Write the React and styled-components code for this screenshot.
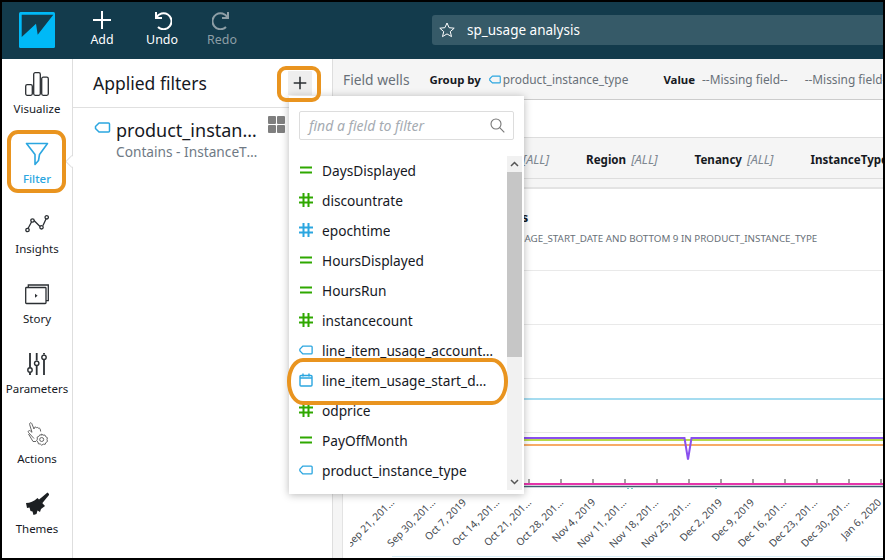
import React from "react";
import styled, { createGlobalStyle } from "styled-components";

const Global = createGlobalStyle`
  html, body { margin: 0; padding: 0; background: #000; }
  * { box-sizing: border-box; }
`;

const FONT = `"Noto Sans", "Open Sans", Arial, sans-serif`;
const BLUE = "#2ba6e0";
const GREEN = "#2fa800";
const ORANGE = "#e9941f";

const Frame = styled.div`
  position: relative;
  width: 885px;
  height: 560px;
  border: 2px solid #000;
  background: #fff;
  font-family: ${FONT};
  color: #16191f;
  overflow: hidden;
  display: flex;
  flex-direction: column;
`;

/* ---------- top bar ---------- */
const TopBar = styled.header`
  height: 57px;
  flex: none;
  background: #133b4c;
  display: flex;
  align-items: center;
  padding-left: 17px;
`;
const Logo = styled.svg`
  width: 36px;
  height: 36px;
  flex: none;
  margin-right: 17px;
  margin-top: -1px;
`;
const TopButton = styled.button`
  width: 60px;
  height: 57px;
  padding: 8px 0 0;
  border: 0;
  background: none;
  font: 12.4px/16px ${FONT};
  color: ${(p) => (p.$off ? "#8d9ea6" : "#fff")};
  display: flex;
  flex-direction: column;
  align-items: center;
  gap: 2px;
  svg { display: block; }
`;
const AnalysisBar = styled.div`
  flex: 1;
  height: 30px;
  margin-left: 180px;
  margin-top: -2px;
  padding-left: 7px;
  background: #365a68;
  border-radius: 3px 0 0 3px;
  display: flex;
  align-items: center;
  gap: 12px;
  color: #fff;
  font-size: 13.5px;
`;

/* ---------- workspace ---------- */
const Workspace = styled.div`
  flex: 1;
  display: flex;
  min-height: 0;
`;
const Rail = styled.nav`
  position: relative;
  width: 71px;
  flex: none;
  padding-top: 13px;
  border-right: 1px solid #dedede;
  display: flex;
  flex-direction: column;
`;
const RailItem = styled.div`
  height: 70px;
  flex: none;
  display: flex;
  flex-direction: column;
  align-items: center;
  font-size: 11.5px;
  line-height: 16px;
  white-space: nowrap;
  color: ${(p) => (p.$active ? BLUE : "#16191f")};
  font-weight: ${(p) => (p.$active ? 500 : 400)};
  svg { display: block; margin-bottom: 5px; }
`;
const Notch = styled.span`
  position: absolute;
  right: -4px;
  top: 98px;
  width: 9px;
  height: 9px;
  background: #fff;
  border-left: 1px solid #dedede;
  border-bottom: 1px solid #dedede;
  transform: rotate(45deg);
`;

const FilterPanel = styled.aside`
  width: 260px;
  flex: none;
  border-right: 1px solid #dedede;
  display: flex;
  flex-direction: column;
`;
const PanelHead = styled.div`
  height: 49px;
  flex: none;
  padding: 0 20px 0 20px;
  border-bottom: 1px solid #e0e0e0;
  display: flex;
  align-items: center;
  justify-content: space-between;
`;
const PanelTitle = styled.h2`
  margin: 0;
  font-size: 17.5px;
  font-weight: 400;
`;
const AddButton = styled.span`
  width: 24px;
  height: 24px;
  background: #eee;
  display: flex;
  align-items: center;
  justify-content: center;
`;
const AppliedFilter = styled.div`
  display: flex;
  padding: 8px 72px 0 21px;
  gap: 5px;
  svg { margin-top: 6px; flex: none; }
`;
const AppliedText = styled.div`
  min-width: 0;
  flex: 1;
`;
const AppliedName = styled.div`
  font-size: 18px;
  line-height: 28px;
  white-space: nowrap;
  overflow: hidden;
  text-overflow: ellipsis;
`;
const AppliedSub = styled.div`
  font-size: 13.7px;
  line-height: 16px;
  color: #6f7a85;
  white-space: nowrap;
  overflow: hidden;
  text-overflow: ellipsis;
`;
const GridIcon = styled.svg`
  position: absolute;
  left: 266px;
  top: 114px;
`;

/* ---------- main area ---------- */
const Main = styled.main`
  flex: 1;
  min-width: 0;
  display: flex;
  flex-direction: column;
`;
const FieldWells = styled.div`
  height: 41px;
  flex: none;
  background: #f5f5f5;
  border-bottom: 1px solid #ccc;
  display: flex;
  align-items: center;
  padding-left: 10px;
  white-space: nowrap;
  overflow: hidden;
  font-size: 11.9px;
`;
const WellsTitle = styled.span`
  font-size: 13.8px;
  color: #687078;
  margin-right: 20px;
`;
const WellLabel = styled.b`
  font-weight: 700;
  font-size: 11.4px;
  margin-right: ${(p) => p.$gap}px;
`;
const WellValue = styled.span`
  color: #687078;
  margin-right: ${(p) => p.$gap}px;
  display: flex;
  align-items: center;
  gap: 2px;
`;
const Spacer = styled.div`
  height: 37px;
  flex: none;
`;
const ControlBar = styled.div`
  height: 42px;
  flex: none;
  background: #f5f5f5;
  border-top: 1px solid #ddd;
  border-bottom: 1px solid #ddd;
  display: flex;
  align-items: center;
  gap: 37px;
  padding: 2px 0 0 126px;
  white-space: nowrap;
  overflow: hidden;
`;
const Control = styled.span`
  display: flex;
  align-items: baseline;
  gap: 5px;
  b { font-weight: 700; font-size: 11.6px; }
  i { color: #7d8791; font-size: 12.6px; }
`;
const Band = styled.div`
  height: 10px;
  flex: none;
  background: #f5f5f5;
  border-bottom: 2px solid #e3e3e3;
`;
const Lower = styled.div`
  flex: 1;
  display: flex;
  min-height: 0;
`;
const Gutter = styled.div`
  width: 10px;
  flex: none;
  background: #f5f5f5;
  border-right: 1px solid #e3e3e3;
`;
const Card = styled.section`
  flex: 1;
  min-width: 0;
  display: flex;
  flex-direction: column;
  overflow: hidden;
`;
const CardHead = styled.div`
  height: 81px;
  flex: none;
  padding-top: 18px;
  white-space: nowrap;
`;
const CardTitle = styled.div`
  font-size: 13px;
  line-height: 20px;
  font-weight: 700;
  padding-left: 4px;
`;
const CardSub = styled.div`
  font-size: 9.8px;
  line-height: 14px;
  margin-top: 5px;
  color: #687078;
  padding-left: 12px;
`;
const Chart = styled.svg`
  display: block;
  flex: none;
  font-family: ${FONT};
`;

/* ---------- popup ---------- */
const Popup = styled.div`
  position: absolute;
  left: 287px;
  top: 94px;
  width: 235px;
  height: 398px;
  background: #fff;
  box-shadow: 0 1px 8px rgba(0, 0, 0, 0.28);
  padding: 15px 10px 0;
`;
const SearchBox = styled.div`
  height: 29px;
  border: 1px solid #ddd;
  border-radius: 2px;
  padding: 0 8px 0 9px;
  display: flex;
  align-items: center;
  justify-content: space-between;
  font-size: 14px;
  font-style: italic;
  color: #a5abb2;
`;
const FieldList = styled.ul`
  list-style: none;
  margin: 15px 0 0;
  padding: 0;
`;
const Field = styled.li`
  height: 30px;
  display: flex;
  align-items: center;
  gap: 9px;
  font-size: 13.7px;
  svg { flex: none; }
  span {
    max-width: 172px;
    white-space: nowrap;
    overflow: hidden;
    text-overflow: ellipsis;
  }
`;
const Scrollbar = styled.div`
  position: absolute;
  right: 2px;
  top: 60px;
  bottom: 4px;
  width: 15px;
  background: #f1f1f1;
  display: flex;
  flex-direction: column;
  justify-content: space-between;
`;
const ScrollTop = styled.div`
  display: flex;
  flex-direction: column;
`;
const ScrollArrow = styled.svg`
  display: block;
  margin: 4px auto;
`;
const Thumb = styled.div`
  height: 185px;
  background: #c6c6c6;
`;

/* ---------- hand-drawn annotations ---------- */
const Callout = styled.div`
  position: absolute;
  left: ${(p) => p.$x}px;
  top: ${(p) => p.$y}px;
  width: ${(p) => p.$w}px;
  height: ${(p) => p.$h}px;
  border: 4px solid ${ORANGE};
  border-radius: ${(p) => p.$r};
  pointer-events: none;
`;

/* ---------- icons ---------- */
const Tag = ({ w = 15, h = 11, color = BLUE }) => (
  <svg width={w} height={h} viewBox="0 0 16 11" fill="none">
    <path d="M4.5 1H14a1 1 0 0 1 1 1v7a1 1 0 0 1-1 1H4.5L1 6.5V4.5Z" stroke={color} strokeWidth="1.5" strokeLinejoin="round" />
  </svg>
);
const Equals = () => (
  <svg width="14" height="14" viewBox="0 0 14 14">
    <path d="M1 4.5h12M1 9.5h12" stroke={GREEN} strokeWidth="2" />
  </svg>
);
const Hash = ({ color = GREEN }) => (
  <svg width="14" height="14" viewBox="0 0 14 14">
    <path d="M4.5 0v14M9.5 0v14M0 4.5h14M0 9.5h14" stroke={color} strokeWidth="2" />
  </svg>
);
const Calendar = () => (
  <svg width="14" height="14" viewBox="0 0 14 14" fill="none" stroke={BLUE} strokeWidth="1.4">
    <rect x="1" y="2.5" width="12" height="10.5" rx="1" />
    <path d="M1 5h12M4 0.5v3M10 0.5v3" />
  </svg>
);
const Plus = ({ size = 20, color = "#fff", w = 2 }) => (
  <svg width={size} height={size} viewBox="0 0 20 20">
    <path d="M10 1v18M1 10h18" stroke={color} strokeWidth={w} />
  </svg>
);
const Glyph = ({ children, w = 24, h = 24, ...rest }) => (
  <svg width={w} height={h} viewBox={`0 0 ${w} ${h}`} fill="none" stroke="#2b2f33" strokeWidth="1.3" {...rest}>
    {children}
  </svg>
);

const fields = [
  ["DaysDisplayed", <Equals />],
  ["discountrate", <Hash />],
  ["epochtime", <Hash color={BLUE} />],
  ["HoursDisplayed", <Equals />],
  ["HoursRun", <Equals />],
  ["instancecount", <Hash />],
  ["line_item_usage_account_id", <Tag w={14} h={10} />],
  ["line_item_usage_start_date", <Calendar />],
  ["odprice", <Hash />],
  ["PayOffMonth", <Equals />],
  ["product_instance_type", <Tag w={14} h={10} />],
];

const railItems = [
  ["Visualize", (
    <Glyph>
      <rect x="0.7" y="12.7" width="6.6" height="10.6" rx="1.5" />
      <rect x="8.7" y="0.7" width="6.6" height="22.6" rx="1.5" />
      <rect x="16.7" y="5.2" width="6.6" height="18.1" rx="1.5" />
    </Glyph>
  )],
  ["Filter", (
    <Glyph stroke={BLUE} strokeWidth="1.6">
      <path d="M1.5 1.5h21L14.5 12.5l-1 6-3.5 4v-10Z" strokeLinejoin="round" />
    </Glyph>
  )],
  ["Insights", (
    <Glyph>
      <path d="M3 16.5 6.5 10M9 8.5 15 14.5M18 13.5 21 7" />
      <circle cx="2.5" cy="18" r="1.7" />
      <circle cx="7.5" cy="8.5" r="1.7" />
      <circle cx="16.5" cy="15.3" r="1.7" />
      <circle cx="21.7" cy="5.3" r="1.7" />
    </Glyph>
  )],
  ["Story", (
    <Glyph>
      <rect x="0.7" y="5.5" width="20.3" height="16" rx="0.8" />
      <path d="M3.3 5.3V3h20v15.7H21" />
      <path d="M10 11.7l2.6 2-2.6 2Z" fill="#2b2f33" stroke="none" />
    </Glyph>
  )],
  ["Parameters", (
    <Glyph strokeWidth="1.8">
      <path d="M5 1v14.5M5 20.5V23M11.7 1v7.5M11.7 14V23M19 1v1.5M19 8V23" />
      <circle cx="5" cy="18" r="2.2" strokeWidth="1.4" />
      <circle cx="11.7" cy="11.3" r="2.2" strokeWidth="1.4" />
      <circle cx="19" cy="5.3" r="2.2" strokeWidth="1.4" />
    </Glyph>
  )],
  ["Actions", (
    <Glyph stroke="#555" strokeWidth="0.9">
      <path d="M9 16.5 L3.5 10.5c-1-1.2 .5-2.6 1.8-1.6L7 10.3 4.6 2.4c-.4-1.6 1.6-2.3 2.2-.8l2.2 5.4.3-1.4c.6-1 1.8-.7 2 .3.5-.8 1.8-.6 2 .4.7-.5 1.7-.1 1.9.8l.5 2.4M3.5 12 l4.5 7.5 h3" strokeLinejoin="round" />
      <circle cx="16.7" cy="17.5" r="2" />
      <path d="M16.7 12l1.3 1.2 1.9-.2.8 1.7 1.7 1-.4 1.9.5 1.8-1.6 1.1-.7 1.8-1.9-.1-1.6 1-1.4-1.2-1.9-.2-.4-1.8-1.4-1.2.8-1.7-.3-1.9 1.7-.8 1-1.6 1.9.3Z" strokeLinejoin="round" />
    </Glyph>
  )],
  ["Themes", (
    <Glyph stroke="none">
      <path d="M22.5 .5l2 2L17 11.5 13.5 8Z" fill="#1c1f22" />
      <path d="M12.5 6 20 14l-4 3-1 3-2.5-1.5-1 3.5-3 1-1-3.5-2-.5-1-3.5-2.5.5-1-5C5 11 9 9.5 12.5 6Z" fill="#1c1f22" />
    </Glyph>
  )],
];

const axisLabels = [
  ["Sep 21, 201...", 395], ["Sep 30, 201...", 436], ["Oct 7, 2019", 467], ["Oct 14, 201...", 500],
  ["Oct 21, 201...", 532], ["Oct 28, 201...", 564], ["Nov 4, 2019", 596], ["Nov 11, 201...", 627],
  ["Nov 18, 201...", 659], ["Nov 25, 201...", 691], ["Dec 2, 2019", 723], ["Dec 9, 2019", 755],
  ["Dec 16, 201...", 787], ["Dec 23, 201...", 818], ["Dec 30, 201...", 850], ["Jan 6, 2020", 882],
];

const OX = 343;
const OY = 270;

function UsageChart() {
  const ticks = Array.from({ length: 12 }, (_, i) => 529 + 32 * i);
  return (
    <Chart width="540" height="288" viewBox={`${OX} ${OY} 540 288`}>
      <defs>
        <clipPath id="plot"><rect x="350" y={OY} width="540" height="288" /></clipPath>
      </defs>
      {[270.5, 324.5, 378.5, 432.5].map((y) => (
        <line key={y} x1={OX} x2="885" y1={y} y2={y} stroke="#e9e9e9" />
      ))}
      <line x1={OX} x2="885" y1="399" y2="399" stroke="#a5dcf0" strokeWidth="2" />
      <line x1={OX} x2="885" y1="440" y2="440" stroke="#b7d94c" strokeWidth="2" />
      <line x1={OX} x2="885" y1="445" y2="445" stroke="#f7ab66" strokeWidth="2" />
      <path d={`M${OX} 438H684.5L688 459.5 691.5 438H885`} fill="none" stroke="#8a50ee" strokeWidth="2" />
      {ticks.map((x) => (
        <line key={x} x1={x} x2={x} y1="479" y2="484" stroke="#444" />
      ))}
      <line x1={OX} x2="885" y1="484" y2="484" stroke="#e535ab" strokeWidth="2" />
      <line x1={OX} x2="885" y1="486.5" y2="486.5" stroke="#3f5d70" strokeWidth="1.6" />
      <path d="M628 488v1M632 488v1M716 488v1" stroke="#3fc0b0" strokeWidth="1.5" />
      <g clipPath="url(#plot)" fontSize="10.2" fill="#44494f" textAnchor="end">
        {axisLabels.map(([t, x]) => (
          <text key={t} x={x} y="503" transform={`rotate(-45 ${x} 503)`}>{t}</text>
        ))}
      </g>
      <line x1="392" x2="885" y1="556.5" y2="556.5" stroke="#d8edf6" />
    </Chart>
  );
}

export default function App() {
  return (
    <>
      <Global />
      <Frame>
        <TopBar>
          <Logo viewBox="0 0 36 36">
            <rect width="36" height="36" rx="1.5" fill="#00b9f7" />
            <path d="M2.7 2.7H34.3L18.7 22.7 17 11.7 2.7 25Z" fill="#133b4c" />
          </Logo>
          <TopButton>
            <Plus size={20} />
            Add
          </TopButton>
          <TopButton>
            <svg width="20" height="20" viewBox="0 0 20 20" fill="none" stroke="#fff" strokeWidth="2">
              <path d="M4 2v6h6M4.4 7.6A8 8 0 1 1 6 17" />
            </svg>
            Undo
          </TopButton>
          <TopButton $off>
            <svg width="20" height="20" viewBox="0 0 20 20" fill="none" stroke="#8d9ea6" strokeWidth="2">
              <path d="M16 2v6h-6M15.6 7.6A8 8 0 1 0 14 17" />
            </svg>
            Redo
          </TopButton>
          <AnalysisBar>
            <svg width="16" height="16" viewBox="0 0 16 16" fill="none" stroke="#fff" strokeWidth="1">
              <path d="M8 1l2.1 4.7 5.1.5-3.9 3.4 1.2 5L8 11.9 3.5 14.6l1.2-5L.8 6.2l5.1-.5Z" strokeLinejoin="round" />
            </svg>
            sp_usage analysis
          </AnalysisBar>
        </TopBar>

        <Workspace>
          <Rail>
            {railItems.map(([label, icon]) => (
              <RailItem key={label} $active={label === "Filter"}>
                {icon}
                {label}
              </RailItem>
            ))}
            <Notch />
          </Rail>

          <FilterPanel>
            <PanelHead>
              <PanelTitle>Applied filters</PanelTitle>
              <AddButton>
                <Plus size={14} color="#2b2f33" w={2.2} />
              </AddButton>
            </PanelHead>
            <AppliedFilter>
              <Tag w={17} h={11} />
              <AppliedText>
                <AppliedName>product_instance_type</AppliedName>
                <AppliedSub>Contains - InstanceType</AppliedSub>
              </AppliedText>
            </AppliedFilter>
          </FilterPanel>

          <Main>
            <FieldWells>
              <WellsTitle>Field wells</WellsTitle>
              <WellLabel $gap={8}>Group by</WellLabel>
              <WellValue $gap={35}>
                <Tag w={12} h={9} />
                product_instance_type
              </WellValue>
              <WellLabel $gap={7}>Value</WellLabel>
              <WellValue $gap={17}>--Missing field--</WellValue>
              <WellValue $gap={0}>--Missing field--</WellValue>
            </FieldWells>
            <Spacer />
            <ControlBar>
              <Control><b>Operation</b><i>[ALL]</i></Control>
              <Control><b>Region</b><i>[ALL]</i></Control>
              <Control><b>Tenancy</b><i>[ALL]</i></Control>
              <Control><b>InstanceType</b><i>[ALL]</i></Control>
            </ControlBar>
            <Band />
            <Lower>
              <Gutter />
              <Card>
                <CardHead>
                  <CardTitle>Hours run by instance types</CardTitle>
                  <CardSub>SHOWING TOP 200 IN LINE_ITEM_USAGE_START_DATE AND BOTTOM 9 IN PRODUCT_INSTANCE_TYPE</CardSub>
                </CardHead>
                <UsageChart />
              </Card>
            </Lower>
          </Main>
        </Workspace>

        <GridIcon width="17" height="17" viewBox="0 0 17 17" fill="#7f7f7f">
          <rect width="8" height="8" rx="1" />
          <rect x="9" width="8" height="8" rx="1" />
          <rect y="9" width="8" height="8" rx="1" />
          <rect x="9" y="9" width="8" height="8" rx="1" />
        </GridIcon>

        <Popup>
          <SearchBox>
            find a field to filter
            <svg width="15" height="15" viewBox="0 0 15 15" fill="none" stroke="#777" strokeWidth="1.1">
              <circle cx="6" cy="6" r="5" />
              <path d="M9.7 9.7 14.3 14.3" />
            </svg>
          </SearchBox>
          <FieldList>
            {fields.map(([name, icon]) => (
              <Field key={name}>
                {icon}
                <span>{name}</span>
              </Field>
            ))}
          </FieldList>
          <Scrollbar>
            <ScrollTop>
              <ScrollArrow width="9" height="8" viewBox="0 0 9 8" fill="none" stroke="#555" strokeWidth="1.5">
                <path d="M1 6 4.5 2.5 8 6" />
              </ScrollArrow>
              <Thumb />
            </ScrollTop>
            <ScrollArrow width="9" height="8" viewBox="0 0 9 8" fill="none" stroke="#555" strokeWidth="1.5">
              <path d="M1 2 4.5 5.5 8 2" />
            </ScrollArrow>
          </Scrollbar>
        </Popup>

        <Callout $x={5} $y={128} $w={59} $h={63} $r="11px" />
        <Callout $x={275} $y={64} $w={44} $h={36} $r="9px" />
        <Callout $x={285} $y={356} $w={221} $h={47} $r="16px / 23px" />
      </Frame>
    </>
  );
}
